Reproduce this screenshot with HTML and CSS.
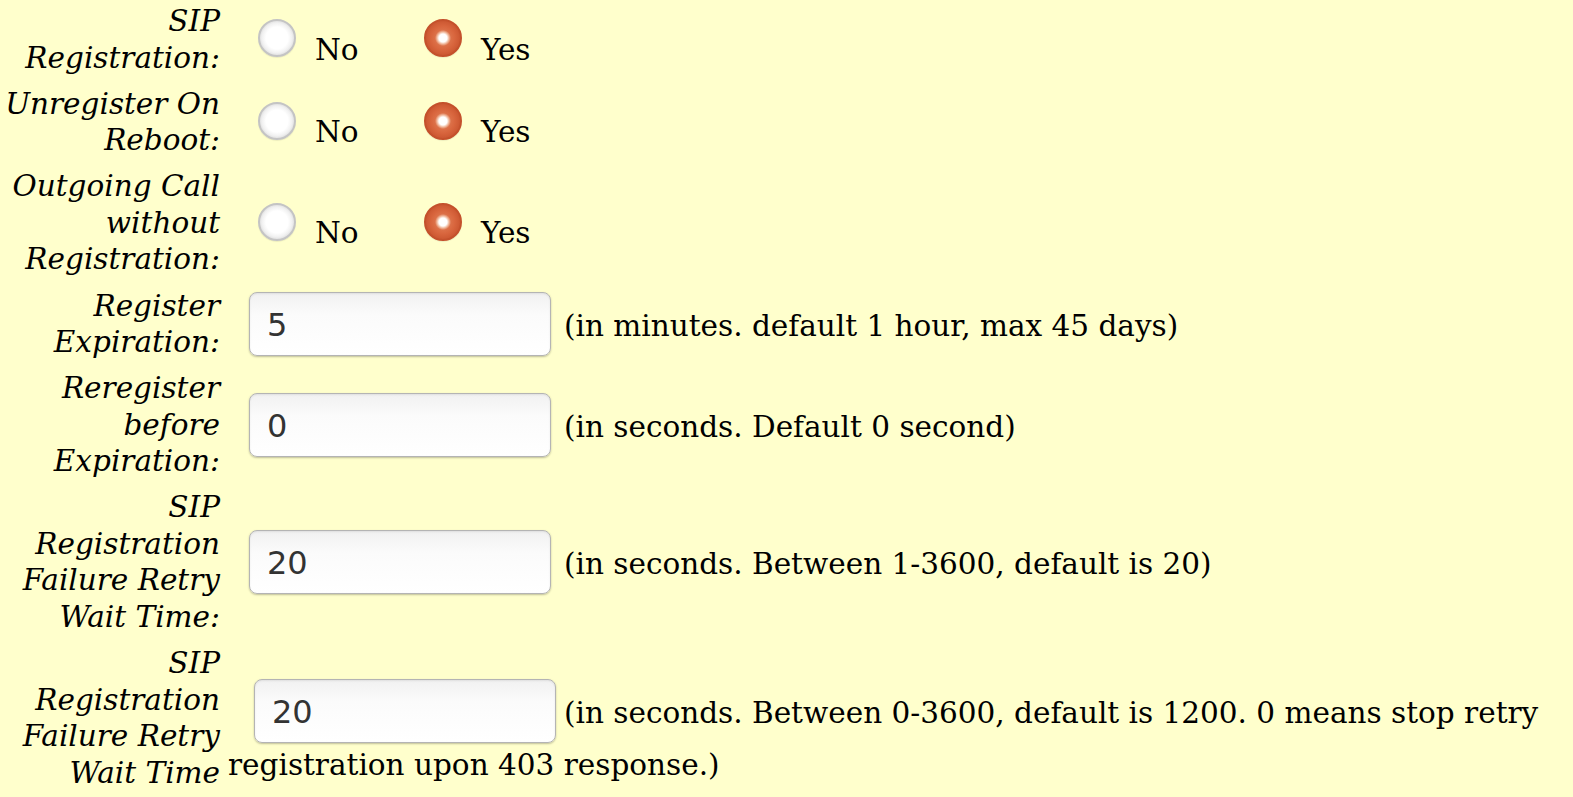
FILE: index.html
```html
<!DOCTYPE html>
<html lang="en">

<head>
    <meta charset="UTF-8">
    <title>SIP Registration</title>
    <link rel="stylesheet" href="styles.css">
</head>

<body>
    <div class="form">
        <div class="label">SIP<br>Registration:</div>
        <div class="field radios">
            <label class="opt"><input type="radio" name="reg" value="0"><span>No</span></label>
            <label class="opt"><input type="radio" name="reg" value="1" checked><span>Yes</span></label>
        </div>

        <div class="label">Unregister On<br>Reboot:</div>
        <div class="field radios">
            <label class="opt"><input type="radio" name="unreg" value="0"><span>No</span></label>
            <label class="opt"><input type="radio" name="unreg" value="1" checked><span>Yes</span></label>
        </div>

        <div class="label">Outgoing Call<br>without<br>Registration:</div>
        <div class="field radios">
            <label class="opt"><input type="radio" name="outgoing" value="0"><span>No</span></label>
            <label class="opt"><input type="radio" name="outgoing" value="1" checked><span>Yes</span></label>
        </div>

        <div class="label">Register<br>Expiration:</div>
        <div class="field">
            <input type="text" class="box" value="5"><span class="hint">(in minutes. default 1 hour, max 45 days)</span>
        </div>

        <div class="label">Reregister<br>before<br>Expiration:</div>
        <div class="field">
            <input type="text" class="box" value="0"><span class="hint">(in seconds. Default 0 second)</span>
        </div>

        <div class="label">SIP<br>Registration<br>Failure Retry<br>Wait Time:</div>
        <div class="field">
            <input type="text" class="box" value="20"><span class="hint">(in seconds. Between 1-3600, default is 20)</span>
        </div>

        <div class="label">SIP<br>Registration<br>Failure Retry<br>Wait Time</div>
        <div class="field wrap">
            <input type="text" class="box" value="20"><span class="hint">(in seconds. Between 0-3600, default is 1200. 0 means stop retry registration upon 403 response.)</span>
        </div>
    </div>
</body>

</html>
```
FILE: styles.css
```css
body {
    margin: 0;
    background-color: #ffffcc;
    color: #000;
    font-family: "DejaVu Serif", serif;
    font-size: 29.5px;
    line-height: 36.5px;
}

.form {
    display: grid;
    grid-template-columns: 220px 1fr;
    column-gap: 8px;
    row-gap: 9.7px;
    padding-top: 3px;
}

.label {
    font-style: italic;
    text-align: right;
    align-self: center;
}

.field {
    align-self: center;
}

.radios {
    display: flex;
    padding-left: 30px;
    margin-bottom: 3px;
}

.opt {
    display: flex;
    align-items: center;
    width: 166px;
}

.opt span {
    margin-top: 24px;
    margin-left: 19px;
}

.opt input {
    appearance: none;
    -webkit-appearance: none;
    width: 38px;
    height: 38px;
    margin: 0;
    border-radius: 50%;
    box-sizing: border-box;
    border: 2px solid #c4c4c4;
    background: radial-gradient(circle, #ffffff 0, #ffffff 11px, #f1f1f1 15px, #e2e2e2 17px);
    box-shadow: 0 1px 1px rgba(0, 0, 0, 0.08);
}

.opt input:checked {
    border-color: #c4512c;
    background: radial-gradient(circle, #ffffff 0, #ffffff 4px, #f0b89c 6px, #dc7048 8px, #d8653d 12px, #cc5832 17px);
}

.box {
    width: 302px;
    height: 64px;
    box-sizing: border-box;
    margin: 0 13px 0 21px;
    padding: 2px 17px 0;
    border: 1px solid #b4b4b4;
    border-radius: 8px;
    background: linear-gradient(to bottom, #f1f1f1, #fbfbfb 35%, #ffffff);
    box-shadow: inset 0 1px 2px rgba(0, 0, 0, 0.08), 0 1px 2px rgba(0, 0, 0, 0.25);
    font-family: "DejaVu Sans", sans-serif;
    font-size: 32px;
    color: #333;
    vertical-align: baseline;
}

.wrap {
    align-self: start;
    padding-top: 34px;
}

.wrap .box {
    margin: 0 8px 4px 26px;
}
```
